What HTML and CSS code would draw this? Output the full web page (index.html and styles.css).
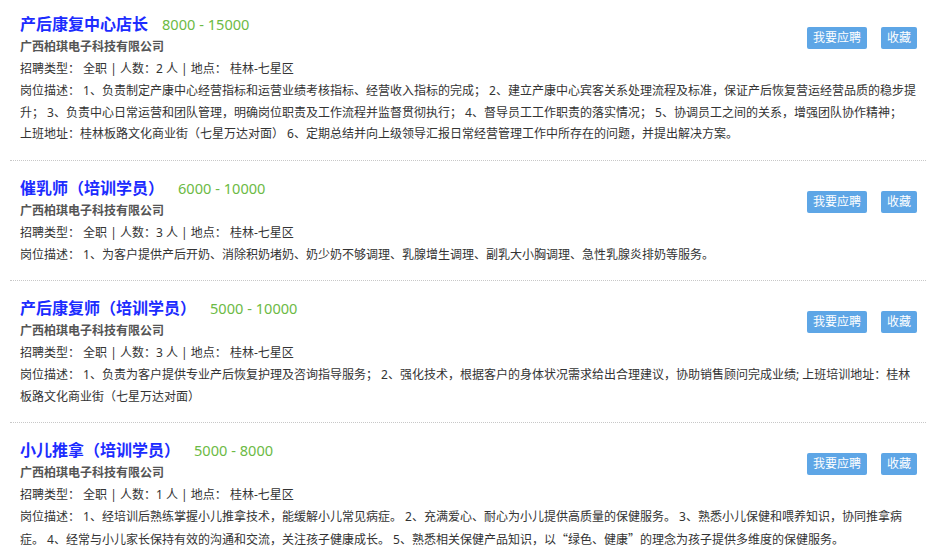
FILE: index.html
```html
<!DOCTYPE html>
<html lang="zh-CN">
<head>
<meta charset="utf-8">
<title>招聘职位</title>
<link rel="stylesheet" href="styles.css">
</head>
<body>
<div class="job-list">
  <div class="job">
    <div class="job-title"><a class="name" href="#">产后康复中心店长</a><span class="salary">8000 - 15000</span></div>
    <div class="company">广西柏琪电子科技有限公司</div>
    <div class="meta">招聘类型： 全职 | 人数：2 人 | 地点： 桂林-七星区</div>
    <div class="actions"><a class="btn" href="#">我要应聘</a><a class="btn" href="#">收藏</a></div>
    <div class="desc">岗位描述： 1、负责制定产康中心经营指标和运营业绩考核指标、经营收入指标的完成； 2、建立产康中心宾客关系处理流程及标准，保证产后恢复营运经营品质的稳步提升； 3、负责中心日常运营和团队管理，明确岗位职责及工作流程并监督贯彻执行； 4、督导员工工作职责的落实情况； 5、协调员工之间的关系，增强团队协作精神；<br>上班地址：桂林板路文化商业街（七星万达对面） 6、定期总结并向上级领导汇报日常经营管理工作中所存在的问题，并提出解决方案。</div>
  </div>
  <div class="job">
    <div class="job-title"><a class="name" href="#">催乳师（培训学员）</a><span class="salary">6000 - 10000</span></div>
    <div class="company">广西柏琪电子科技有限公司</div>
    <div class="meta">招聘类型： 全职 | 人数：3 人 | 地点： 桂林-七星区</div>
    <div class="actions"><a class="btn" href="#">我要应聘</a><a class="btn" href="#">收藏</a></div>
    <div class="desc">岗位描述： 1、为客户提供产后开奶、消除积奶堵奶、奶少奶不够调理、乳腺增生调理、副乳大小胸调理、急性乳腺炎排奶等服务。</div>
  </div>
  <div class="job">
    <div class="job-title"><a class="name" href="#">产后康复师（培训学员）</a><span class="salary">5000 - 10000</span></div>
    <div class="company">广西柏琪电子科技有限公司</div>
    <div class="meta">招聘类型： 全职 | 人数：3 人 | 地点： 桂林-七星区</div>
    <div class="actions"><a class="btn" href="#">我要应聘</a><a class="btn" href="#">收藏</a></div>
    <div class="desc">岗位描述： 1、负责为客户提供专业产后恢复护理及咨询指导服务； 2、强化技术，根据客户的身体状况需求给出合理建议，协助销售顾问完成业绩; 上班培训地址：桂林板路文化商业街（七星万达对面）</div>
  </div>
  <div class="job">
    <div class="job-title"><a class="name" href="#">小儿推拿（培训学员）</a><span class="salary">5000 - 8000</span></div>
    <div class="company">广西柏琪电子科技有限公司</div>
    <div class="meta">招聘类型： 全职 | 人数：1 人 | 地点： 桂林-七星区</div>
    <div class="actions"><a class="btn" href="#">我要应聘</a><a class="btn" href="#">收藏</a></div>
    <div class="desc">岗位描述： 1、经培训后熟练掌握小儿推拿技术，能缓解小儿常见病症。 2、充满爱心、耐心为小儿提供高质量的保健服务。 3、熟悉小儿保健和喂养知识，协同推拿病症。 4、经常与小儿家长保持有效的沟通和交流，关注孩子健康成长。 5、熟悉相关保健产品知识，以<span class="cjk">“绿色、健康”</span>的理念为孩子提供多维度的保健服务。</div>
  </div>
</div>
</body>
</html>
```

FILE: styles.css
```css
html, body {
  margin: 0;
  padding: 0;
  background: #fff;
}

body {
  font-family: "Noto Sans", "Noto Sans CJK SC", sans-serif;
  font-size: 12px;
  color: #333;
}

.job-list {
  margin: 0 10px;
}

.job {
  display: grid;
  grid-template-columns: 1fr auto;
  padding: 14px 9px 15px 10px;
  border-bottom: 1px dotted #c8c8c8;
}

.job:first-child {
  padding-top: 11px;
}

.job:last-child {
  border-bottom: none;
}

.job-title {
  grid-column: 1;
  grid-row: 1;
  line-height: 25px;
  height: 25px;
  white-space: nowrap;
}

.name {
  font-family: "Noto Sans CJK SC", sans-serif;
  font-size: 16px;
  font-weight: bold;
  color: #1c2cff;
  text-decoration: none;
}

.salary {
  margin-left: 14px;
  font-family: "Noto Sans", "Noto Sans CJK SC", sans-serif;
  font-size: 14.6px;
  color: #6cba45;
}

.company {
  grid-column: 1;
  grid-row: 2;
  line-height: 21px;
  font-weight: bold;
  color: #555;
}

.meta {
  grid-column: 1;
  grid-row: 3;
  line-height: 23px;
  color: #333;
}

.actions {
  grid-column: 2;
  grid-row: 1 / 4;
  align-self: start;
  margin-top: 16px;
  display: flex;
  gap: 14px;
}

.btn {
  display: block;
  height: 22px;
  line-height: 22px;
  padding: 0 6px;
  background: #5ea6e6;
  border-radius: 2px;
  color: #fff;
  font-size: 12px;
  text-decoration: none;
}

.desc {
  grid-column: 1 / -1;
  line-height: 21.5px;
  color: #333;
  margin-right: -4px;
}

.cjk {
  font-family: "Noto Sans CJK SC", sans-serif;
}
```
